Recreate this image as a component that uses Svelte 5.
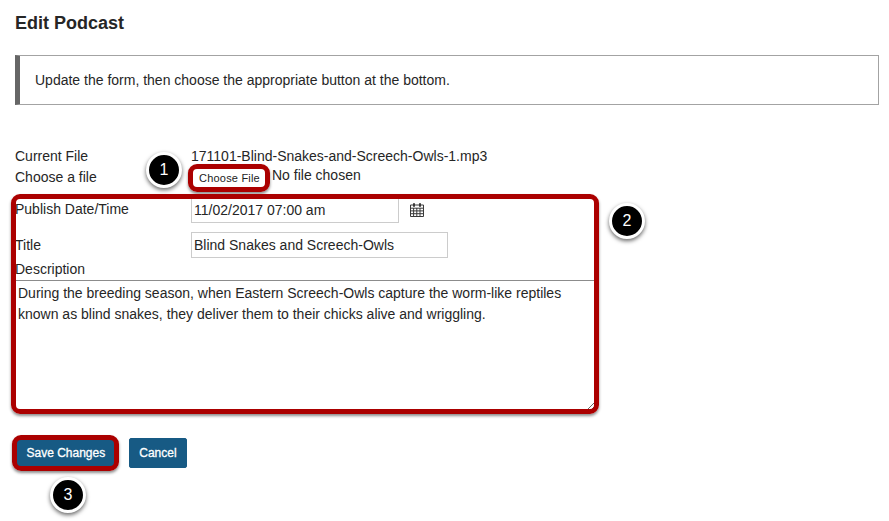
<script>
  const callouts = [
    { n: 1, x: 164, y: 170 },
    { n: 2, x: 627, y: 221 },
    { n: 3, x: 68, y: 495 }
  ];
  const boxes = [
    { x: 188, y: 164, w: 82, h: 28 },
    { x: 11, y: 194, w: 588, h: 220 },
    { x: 12, y: 435, w: 107, h: 36 }
  ];
  const description =
    "During the breeding season, when Eastern Screech-Owls capture the worm-like reptiles known as blind snakes, they deliver them to their chicks alive and wriggling.";
</script>

<main class="page">
  <h1>Edit Podcast</h1>
  <div class="notice">Update the form, then choose the appropriate button at the bottom.</div>

  <form class="form" onsubmit={(e) => e.preventDefault()}>
    <div class="row current"><span class="label">Current File</span><span>171101-Blind-Snakes-and-Screech-Owls-1.mp3</span></div>
    <div class="row choose">
      <span class="label">Choose a file</span>
      <button type="button" class="file">Choose File</button>
      <span class="nofile">No file chosen</span>
    </div>
    <div class="row date">
      <span class="label">Publish Date/Time</span>
      <input class="text date-input" value="11/02/2017 07:00 am" />
      <svg class="cal" width="14" height="15" viewBox="0 0 14 15" aria-hidden="true">
        <path d="M.5 3h13v11.5H.5zM.5 6.2h13M.5 8.9h13M.5 11.7h13M3.6 6v8.5M6.8 6v8.5M10 6v8.5" fill="none" stroke="#3a3a3a" stroke-width="1"/>
        <rect x="3" y="1" width="2" height="4" rx="1" fill="#3a3a3a"/>
        <rect x="9" y="1" width="2" height="4" rx="1" fill="#3a3a3a"/>
      </svg>
    </div>
    <div class="row title">
      <span class="label">Title</span>
      <input class="text title-input" value="Blind Snakes and Screech-Owls" />
    </div>
    <div class="desc-label">Description</div>
    <textarea class="desc" value={description}></textarea>
    <div class="actions">
      <button type="button" class="btn">Save Changes</button>
      <button type="button" class="btn">Cancel</button>
    </div>
  </form>

  {#each boxes as b}
    <div class="mark" style="left:{b.x}px;top:{b.y}px;width:{b.w}px;height:{b.h}px"></div>
  {/each}
  {#each callouts as c}
    <div class="callout" style="left:{c.x - 18}px;top:{c.y - 18}px">{c.n}</div>
  {/each}
</main>

<style>
  :global(body) {
    margin: 0;
    background: #fff;
  }
  .page {
    position: relative;
    width: 889px;
    height: 521px;
    overflow: hidden;
    box-sizing: border-box;
    padding: 13px 10px 0 15px;
    font-family: "Liberation Sans", Arial, sans-serif;
    font-size: 14px;
    color: #262626;
  }
  h1 {
    margin: 0;
    font-size: 18px;
    line-height: 21px;
    font-weight: 700;
    color: #262626;
  }
  .notice {
    box-sizing: border-box;
    height: 50px;
    margin-top: 21px;
    padding-left: 15px;
    display: flex;
    align-items: center;
    border: 1px solid #a3a3a3;
    border-left: 5px solid #666;
    width: 864px;
  }
  .form {
    margin-top: 42px;
  }
  .row {
    display: flex;
    align-items: flex-start;
  }
  .label {
    width: 176px;
    flex: none;
  }
  .current {
    height: 21px;
    line-height: 18px;
  }
  .choose {
    height: 26px;
    line-height: 20px;
  }
  .choose .label {
    margin-top: -1px;
  }
  .file {
    box-sizing: border-box;
    width: 77px;
    height: 22px;
    margin-top: -1px;
    padding: 0;
    border: 0;
    border-radius: 4px;
    background: #fff;
    font: 11px "Liberation Sans", Arial, sans-serif;
    letter-spacing: 0.2px;
    color: #222;
  }
  .nofile {
    margin-left: 4px;
    margin-top: -3px;
  }
  .text {
    box-sizing: border-box;
    height: 26px;
    margin-top: 3px;
    padding: 0 2px;
    border: 1px solid #ccc;
    background: #fff;
    font: 14px "Liberation Sans", Arial, sans-serif;
    color: #262626;
    outline: 0;
  }
  .date {
    height: 35px;
  }
  .date .label {
    line-height: 18px;
    margin-top: 6px;
  }
  .date-input {
    width: 208px;
  }
  .cal {
    margin: 8px 0 0 11px;
  }
  .title {
    height: 32px;
  }
  .title .label {
    line-height: 27px;
    margin-top: 3px;
  }
  .title-input {
    width: 257px;
  }
  .desc-label {
    height: 19px;
    line-height: 16px;
  }
  .desc {
    display: block;
    box-sizing: border-box;
    width: 580px;
    height: 131px;
    margin: 0;
    padding: 2px 3px;
    border: 0;
    border-top: 1px solid #8c8c8c;
    font: 14px/21px "Liberation Sans", Arial, sans-serif;
    color: #262626;
    outline: 0;
  }
  .actions {
    display: flex;
    gap: 13px;
    margin-top: 27px;
    margin-left: 1px;
  }
  .btn {
    box-sizing: border-box;
    height: 30px;
    padding: 0 9.5px;
    border: 1px solid #175a84;
    border-radius: 2px;
    background: #175a84;
    color: #fff;
    font: 12px "Liberation Sans", Arial, sans-serif;
    -webkit-text-stroke: 0.3px #fff;
  }
  .mark {
    position: absolute;
    box-sizing: border-box;
    border: 5px solid #ab0000;
    border-radius: 9px;
    box-shadow: 0 2px 3px rgba(0, 0, 0, 0.45);
    pointer-events: none;
  }
  .callout {
    position: absolute;
    box-sizing: border-box;
    width: 36px;
    height: 36px;
    display: flex;
    align-items: center;
    justify-content: center;
    border: 3px solid #fff;
    border-radius: 50%;
    background: #000;
    color: #fff;
    font-size: 16px;
    box-shadow: 0 2px 4px rgba(0, 0, 0, 0.6);
  }
</style>
